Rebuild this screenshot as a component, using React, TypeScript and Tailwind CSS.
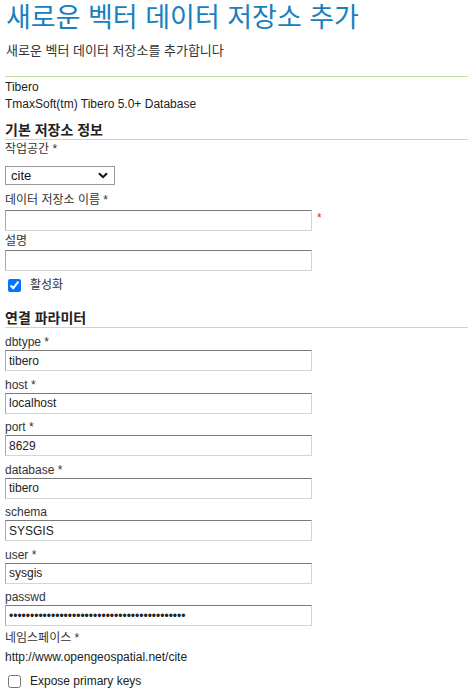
import React from "react";

const FONT = '"Liberation Sans", "Noto Sans CJK KR", sans-serif';

function Field({ label, value, password }: { label: string; value: string; password?: boolean }) {
  return (
    <div className="flex flex-col">
      <div className="text-[12px] leading-[16px] text-[#333]">{label}</div>
      <input
        type={password ? "password" : "text"}
        defaultValue={value}
        className="h-[21px] w-[307px] border border-t-[#7a7a7a] border-l-[#a9a9a9] border-r-[#d4d4d4] border-b-[#d4d4d4] bg-white px-[3px] text-[12px] text-[#222] outline-none"
        style={{ fontFamily: FONT }}
      />
    </div>
  );
}

export default function App() {
  return (
    <div className="min-h-[688px] bg-white pl-[5px] text-[#333]" style={{ fontFamily: FONT }}>
      <h1 className="pl-[1px] text-[27px] leading-[36px] font-normal text-[#1780be]">새로운 벡터 데이터 저장소 추가</h1>
      <p className="mt-[7px] pl-[1px] text-[13px] leading-[16px] text-[#333]">새로운 벡터 데이터 저장소를 추가합니다</p>
      <div className="mt-[17px] h-px bg-[#c5e09c]" />
      <div className="mt-[2px] text-[12px] leading-[17px] text-[#222]">Tibero</div>
      <div className="text-[12px] leading-[17px] text-[#222]">TmaxSoft(tm) Tibero 5.0+ Database</div>
      <h2 className="mt-[8px] border-b border-[#c5e09c] text-[14px] leading-[18px] font-bold text-[#222]">기본 저장소 정보</h2>
      <div className="mt-[1px] text-[12px] leading-[16px] text-[#333]">작업공간 *</div>
      <div className="relative mt-[9px] h-[19px] w-[110px] border border-[#9a9a9a] bg-white">
        <span className="absolute left-[5px] top-0 text-[13px] leading-[17px] text-[#111]">cite</span>
        <svg className="absolute right-[6px] top-[5px]" width="10" height="7" viewBox="0 0 10 7">
          <path d="M1 1.2 L5 5.2 L9 1.2" fill="none" stroke="#111" strokeWidth="2" />
        </svg>
      </div>
      <div className="mt-[7px] text-[12px] leading-[16px] text-[#333]">데이터 저장소 이름 *</div>
      <div className="mt-[2px] flex items-start">
        <input className="h-[21px] w-[307px] border border-t-[#7a7a7a] border-l-[#a9a9a9] border-r-[#d4d4d4] border-b-[#d4d4d4] bg-white outline-none" />
        <span className="ml-[5px] mt-[1px] text-[12px] leading-[14px] text-[#ee2222]">*</span>
      </div>
      <div className="mt-[2px] text-[12px] leading-[16px] text-[#333]">설명</div>
      <input className="mt-[1px] block h-[21px] w-[307px] border border-t-[#7a7a7a] border-l-[#a9a9a9] border-r-[#d4d4d4] border-b-[#d4d4d4] bg-white outline-none" />
      <label className="mt-[6px] flex items-center">
        <input type="checkbox" defaultChecked className="ml-[3px] h-[13px] w-[13px]" />
        <span className="ml-[9px] text-[12px] leading-[16px] text-[#333]">활성화</span>
      </label>
      <h2 className="mt-[16px] border-b border-[#c5e09c] text-[14px] leading-[18px] font-bold text-[#222]">연결 파라미터</h2>
      <div className="mt-[6px] flex flex-col gap-[5.5px]">
        <Field label="dbtype *" value="tibero" />
        <Field label="host *" value="localhost" />
        <Field label="port *" value="8629" />
        <Field label="database *" value="tibero" />
        <Field label="schema" value="SYSGIS" />
        <Field label="user *" value="sysgis" />
        <Field label="passwd" value="sysgissysgissysgissysgissysgissysgissysgis" password />
      </div>
      <div className="mt-[4px] text-[12px] leading-[16px] text-[#333]">네임스페이스 *</div>
      <div className="mt-[3px] text-[12px] leading-[16px] text-[#222]">http://www.opengeospatial.net/cite</div>
      <label className="mt-[8px] flex items-center">
        <input type="checkbox" className="ml-[3px] h-[13px] w-[13px]" />
        <span className="ml-[9px] text-[12px] leading-[16px] text-[#222]">Expose primary keys</span>
      </label>
    </div>
  );
}
